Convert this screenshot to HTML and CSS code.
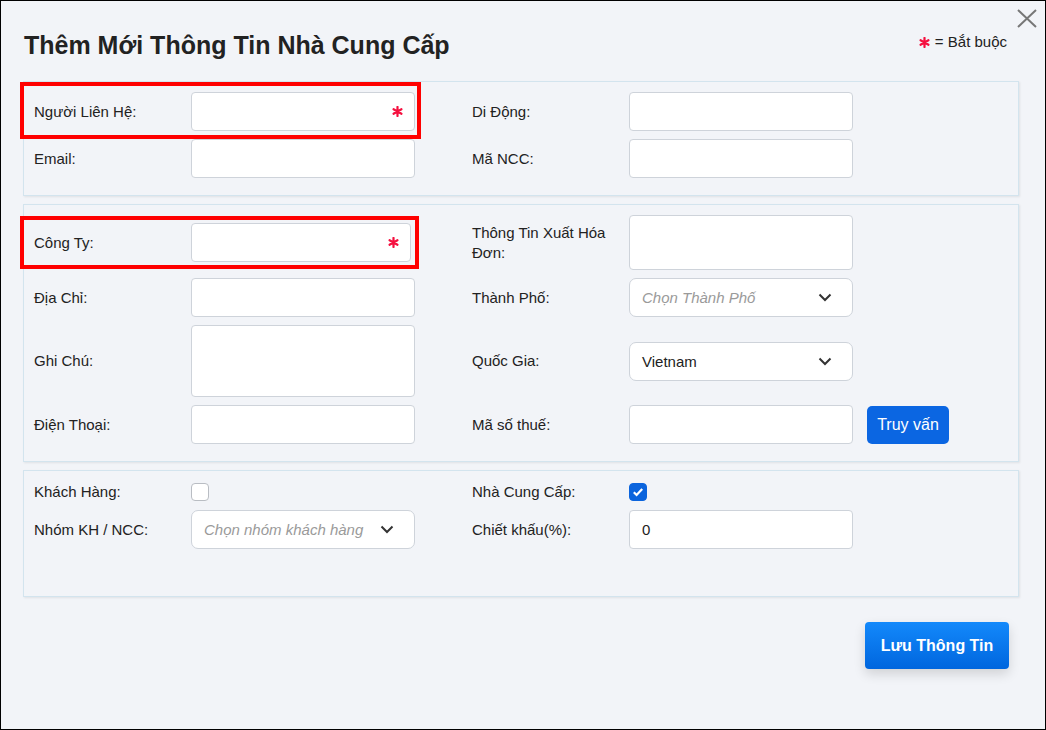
FILE: index.html
```html
<!DOCTYPE html>
<html lang="vi">
<head>
<meta charset="utf-8">
<title>Thêm Mới Thông Tin Nhà Cung Cấp</title>
<link rel="stylesheet" href="styles.css">
</head>
<body>
<div class="modal">
  <button class="close" aria-label="Đóng">
    <svg width="22" height="20" viewBox="0 0 22 20"><path d="M2 1 L20 18 M20 1 L2 18" stroke="#777" stroke-width="2" fill="none"/></svg>
  </button>
  <header class="head">
    <h1 class="title">Thêm Mới Thông Tin Nhà Cung Cấp</h1>
    <div class="legend">
      <svg class="ast" width="11" height="11" viewBox="0 0 12 12"><path d="M6 1 V11 M1.7 3.5 L10.3 8.5 M10.3 3.5 L1.7 8.5" stroke="#f5103f" stroke-width="2.4" stroke-linecap="round" fill="none"/></svg>
      <span>= Bắt buộc</span>
    </div>
  </header>

  <div class="body">
    <section class="box">
      <div class="field">
        <label class="lbl">Người Liên Hệ:</label>
        <div class="ctl req"><input class="inp" type="text"><svg class="ast in" width="11" height="11" viewBox="0 0 12 12"><path d="M6 1 V11 M1.7 3.5 L10.3 8.5 M10.3 3.5 L1.7 8.5" stroke="#f5103f" stroke-width="2.4" stroke-linecap="round" fill="none"/></svg></div>
      </div>
      <div class="field">
        <label class="lbl">Di Động:</label>
        <div class="ctl"><input class="inp" type="text"></div>
      </div>
      <div class="field">
        <label class="lbl">Email:</label>
        <div class="ctl"><input class="inp" type="text"></div>
      </div>
      <div class="field">
        <label class="lbl">Mã NCC:</label>
        <div class="ctl"><input class="inp" type="text"></div>
      </div>
    </section>

    <section class="box">
      <div class="field">
        <label class="lbl">Công Ty:</label>
        <div class="ctl req narrow"><input class="inp" type="text"><svg class="ast in" width="11" height="11" viewBox="0 0 12 12"><path d="M6 1 V11 M1.7 3.5 L10.3 8.5 M10.3 3.5 L1.7 8.5" stroke="#f5103f" stroke-width="2.4" stroke-linecap="round" fill="none"/></svg></div>
      </div>
      <div class="field">
        <label class="lbl">Thông Tin Xuất Hóa Đơn:</label>
        <div class="ctl"><textarea class="inp ta-s"></textarea></div>
      </div>
      <div class="field">
        <label class="lbl">Địa Chỉ:</label>
        <div class="ctl"><input class="inp" type="text"></div>
      </div>
      <div class="field">
        <label class="lbl">Thành Phố:</label>
        <div class="ctl"><div class="sel"><span class="ph">Chọn Thành Phố</span><svg class="chev" width="14" height="9" viewBox="0 0 14 9"><path d="M1.5 1.5 L7 7 L12.5 1.5" stroke="#333" stroke-width="2" fill="none"/></svg></div></div>
      </div>
      <div class="field">
        <label class="lbl">Ghi Chú:</label>
        <div class="ctl"><textarea class="inp ta-l"></textarea></div>
      </div>
      <div class="field">
        <label class="lbl">Quốc Gia:</label>
        <div class="ctl"><div class="sel"><span class="val">Vietnam</span><svg class="chev" width="14" height="9" viewBox="0 0 14 9"><path d="M1.5 1.5 L7 7 L12.5 1.5" stroke="#333" stroke-width="2" fill="none"/></svg></div></div>
      </div>
      <div class="field">
        <label class="lbl">Điện Thoại:</label>
        <div class="ctl"><input class="inp" type="text"></div>
      </div>
      <div class="field">
        <label class="lbl">Mã số thuế:</label>
        <div class="ctl"><input class="inp" type="text"></div>
        <button class="btn-q">Truy vấn</button>
      </div>
    </section>

    <section class="box box3">
      <div class="field frow">
        <label class="lbl">Khách Hàng:</label>
        <div class="ctl"><span class="chk"></span></div>
      </div>
      <div class="field frow">
        <label class="lbl">Nhà Cung Cấp:</label>
        <div class="ctl"><span class="chk on"><svg width="12" height="10" viewBox="0 0 12 10"><path d="M1.8 5.2 L4.6 8 L10.2 2" stroke="#fff" stroke-width="2.2" fill="none"/></svg></span></div>
      </div>
      <div class="field">
        <label class="lbl">Nhóm KH / NCC:</label>
        <div class="ctl"><div class="sel"><span class="ph">Chọn nhóm khách hàng</span><svg class="chev" width="14" height="9" viewBox="0 0 14 9"><path d="M1.5 1.5 L7 7 L12.5 1.5" stroke="#333" stroke-width="2" fill="none"/></svg></div></div>
      </div>
      <div class="field">
        <label class="lbl">Chiết khấu(%):</label>
        <div class="ctl"><input class="inp" type="text" value="0"></div>
      </div>
    </section>

    <div class="foot">
      <button class="btn-save">Lưu Thông Tin</button>
    </div>
  </div>

  <div class="mark mark1"></div>
  <div class="mark mark2"></div>
</div>
</body>
</html>
```
FILE: styles.css
```css
* { box-sizing: border-box; }
html, body { margin: 0; padding: 0; }
body {
  font-family: "Liberation Sans", Arial, sans-serif;
  color: #222;
  background: #f2f4f8;
}
.modal {
  position: relative;
  width: 1046px;
  height: 730px;
  border: 1px solid #000;
  background: #f2f4f8;
}
.close {
  position: absolute;
  top: 8px;
  right: 7px;
  padding: 0;
  border: 0;
  background: none;
  width: 22px;
  height: 20px;
  line-height: 0;
}
.head {
  display: flex;
  justify-content: space-between;
  align-items: flex-start;
  padding: 30px 38px 0 23px;
  height: 80px;
}
.title {
  margin: 0;
  font-size: 25px;
  line-height: 28px;
  font-weight: bold;
  color: #222;
}
.legend {
  display: flex;
  align-items: center;
  gap: 5px;
  margin-top: 2px;
  font-size: 15px;
  line-height: 18px;
  color: #222;
}
.body {
  padding: 0 26px 0 22px;
}
.box {
  display: grid;
  grid-template-columns: 438px 1fr;
  row-gap: 8px;
  align-items: center;
  padding: 10px 10px 17px 10px;
  border: 1px solid #d3e4ee;
  box-shadow: 1px 1px 2px rgba(0, 0, 0, 0.08);
  margin-bottom: 8px;
}
.box3 { padding-bottom: 47px; }
.field {
  display: flex;
  align-items: center;
}
.frow { min-height: 21px; }
.lbl {
  width: 157px;
  flex-shrink: 0;
  font-size: 15px;
  line-height: 20px;
  padding-right: 18px;
  color: #222;
}
.ctl {
  position: relative;
  width: 224px;
}
.ctl.narrow { width: 220px; }
.inp {
  display: block;
  width: 100%;
  height: 39px;
  border: 1px solid #ced3da;
  border-radius: 4px;
  background: #fff;
  padding: 0 12px;
  font-family: "Liberation Sans", Arial, sans-serif;
  font-size: 15px;
  color: #222;
  outline: none;
}
textarea.inp { resize: none; padding: 8px 12px; }
.ta-s { height: 55px; }
.ta-l { height: 72px; }
.ast.in {
  position: absolute;
  right: 12px;
  top: 14px;
}
.sel {
  display: flex;
  align-items: center;
  justify-content: space-between;
  height: 39px;
  border: 1px solid #ced3da;
  border-radius: 7px;
  background: #fff;
  padding: 0 20px 0 12px;
  font-size: 15px;
}
.ph { color: #9a9a9a; font-style: italic; }
.val { color: #222; }
.chev { display: block; }
.chk {
  display: flex;
  align-items: center;
  justify-content: center;
  width: 18px;
  height: 18px;
  border: 1px solid #b9bdc3;
  border-radius: 4px;
  background: #fff;
}
.chk.on {
  background: #0b64dd;
  border-color: #0b64dd;
}
.btn-q {
  margin-left: 14px;
  width: 82px;
  height: 38px;
  border: 0;
  border-radius: 5px;
  background: #0b66e2;
  color: #fff;
  font-family: "Liberation Sans", Arial, sans-serif;
  font-size: 16px;
  padding: 0;
}
.foot {
  display: flex;
  justify-content: flex-end;
  padding: 17px 10px 0 0;
}
.btn-save {
  width: 144px;
  height: 47px;
  border: 0;
  border-radius: 4px;
  background: linear-gradient(#1389fb, #0066de);
  color: #fff;
  font-family: "Liberation Sans", Arial, sans-serif;
  font-size: 16px;
  font-weight: bold;
  box-shadow: 0 5px 12px rgba(0, 0, 0, 0.14);
}
.mark {
  position: absolute;
  border: 4px solid #ff0000;
  pointer-events: none;
}
.mark1 { left: 19px; top: 81px; width: 401px; height: 57px; }
.mark2 { left: 19px; top: 215px; width: 399px; height: 53px; }
```
